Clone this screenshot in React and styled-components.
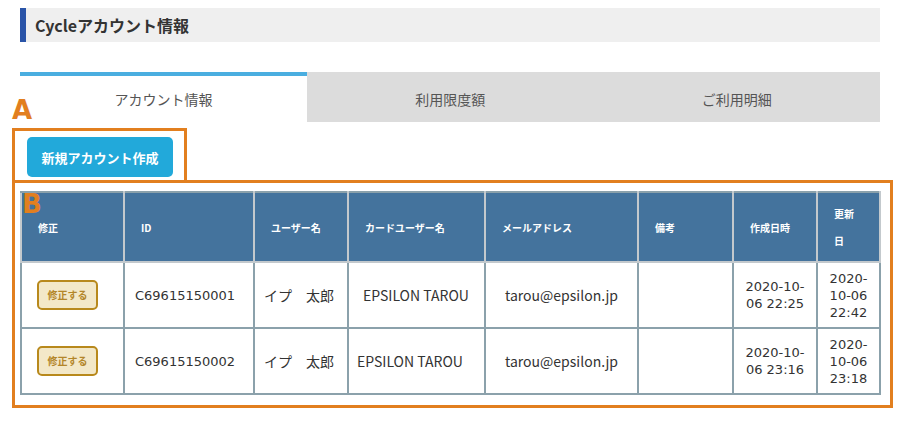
import React from "react";
import styled, { createGlobalStyle } from "styled-components";

const GlobalStyle = createGlobalStyle`
  body {
    margin: 0;
    background: #fff;
    font-family: "Noto Sans CJK JP", "Noto Sans", sans-serif;
  }
`;

const columns = [
  { label: "修正", width: 103 },
  { label: "ID", width: 130 },
  { label: "ユーザー名", width: 94 },
  { label: "カードユーザー名", width: 137 },
  { label: "メールアドレス", width: 153 },
  { label: "備考", width: 95 },
  { label: "作成日時", width: 84 },
  { label: "更新日", width: 63 },
];

const accounts = [
  {
    id: "C69615150001",
    user: "イプ　太郎",
    card: "EPSILON TAROU",
    cardPad: 14,
    mail: "tarou@epsilon.jp",
    created: ["2020-10-", "06 22:25"],
    updated: ["2020-", "10-06", "22:42"],
  },
  {
    id: "C69615150002",
    user: "イプ　太郎",
    card: "EPSILON TAROU",
    cardPad: 8,
    mail: "tarou@epsilon.jp",
    created: ["2020-10-", "06 23:16"],
    updated: ["2020-", "10-06", "23:18"],
  },
];

const tabs = ["アカウント情報", "利用限度額", "ご利用明細"];

function App() {
  return (
    <>
      <GlobalStyle />
      <Page>
        <TitleBar>Cycleアカウント情報</TitleBar>
        <Tabs>
          {tabs.map((t, i) => (
            <Tab key={t} $active={i === 0}>
              {t}
            </Tab>
          ))}
        </Tabs>

        <AnnotA>
          <Mark $top={-34}>A</Mark>
          <CreateButton>新規アカウント作成</CreateButton>
        </AnnotA>

        <AnnotB>
          <Mark $top={8} $left={7}>B</Mark>
          <Table>
            <colgroup>
              {columns.map((c) => (
                <col key={c.label} style={{ width: c.width }} />
              ))}
            </colgroup>
            <thead>
              <tr>
                {columns.map((c) => (
                  <Th key={c.label}>{c.label}</Th>
                ))}
              </tr>
            </thead>
            <tbody>
              {accounts.map((a) => (
                <tr key={a.id}>
                  <Td $pad={15}>
                    <EditButton>修正する</EditButton>
                  </Td>
                  <Td $mono $pad={10}>{a.id}</Td>
                  <Td $pad={9}>{a.user}</Td>
                  <Td $pad={a.cardPad}>{a.card}</Td>
                  <Td $center>{a.mail}</Td>
                  <Td />
                  <Td $mono $center>
                    {a.created.map((l) => (
                      <div key={l}>{l}</div>
                    ))}
                  </Td>
                  <Td $mono $center>
                    {a.updated.map((l) => (
                      <div key={l}>{l}</div>
                    ))}
                  </Td>
                </tr>
              ))}
            </tbody>
          </Table>
        </AnnotB>
      </Page>
    </>
  );
}

export default App;

const Page = styled.div`
  width: 900px;
  padding: 8px 20px 0;
  box-sizing: border-box;
`;

const TitleBar = styled.h1`
  margin: 0 0 30px;
  height: 34px;
  display: flex;
  align-items: center;
  padding-left: 9px;
  background: #efefef;
  border-left: 6px solid #2a54a8;
  font-size: 16px;
  font-weight: 700;
  color: #333;
`;

const Tabs = styled.div`
  display: grid;
  grid-template-columns: 287px 1fr 1fr;
  height: 50px;
`;

const Tab = styled.div`
  display: flex;
  align-items: center;
  justify-content: center;
  font-size: 14px;
  color: #555;
  background: ${(p) => (p.$active ? "#fff" : "#dcdcdc")};
  border-top: 4px solid ${(p) => (p.$active ? "#4aaee0" : "#dcdcdc")};
`;

const AnnotA = styled.div`
  position: relative;
  width: 175px;
  box-sizing: border-box;
  margin: 6px 0 0 -8px;
  padding: 6px 12px 3px;
  border: 3px solid #e27f1f;
  border-bottom: none;
`;

const AnnotB = styled.div`
  position: relative;
  width: 881px;
  box-sizing: border-box;
  margin-left: -8px;
  padding: 8px 10px 10px 5px;
  border: 3px solid #e27f1f;
`;

const Mark = styled.span`
  position: absolute;
  top: ${(p) => p.$top}px;
  left: ${(p) => p.$left ?? -3}px;
  font-family: "DejaVu Sans", sans-serif;
  font-weight: 700;
  font-size: 26px;
  line-height: 1;
  color: #e27f1f;
  z-index: 2;
`;

const CreateButton = styled.button`
  height: 40px;
  width: 146px;
  padding: 0;
  border: none;
  border-radius: 5px;
  background: #22a9da;
  color: #fff;
  font-family: "Noto Sans CJK JP", sans-serif;
  font-size: 13px;
  font-weight: 700;
`;

const Table = styled.table`
  border-collapse: collapse;
  table-layout: fixed;
  width: 859px;
  border: 2px solid #8ba1ab;
`;

const Th = styled.th`
  height: 68px;
  padding: 0 16px;
  background: #44739d;
  color: #fff;
  font-size: 10px;
  font-weight: 700;
  text-align: left;
  line-height: 27px;
  border: 2px solid #c3c9cd;
  border-top-color: #8ba1ab;
`;

const Td = styled.td`
  height: 64px;
  padding: 0 4px 0 ${(p) => p.$pad ?? 4}px;
  border: 2px solid #8ba1ab;
  text-align: ${(p) => (p.$center ? "center" : "left")};
  font-family: ${(p) =>
    p.$mono ? '"DejaVu Sans", sans-serif' : '"Noto Sans CJK JP", sans-serif'};
  font-size: ${(p) => (p.$mono ? "13px" : "14px")};
  line-height: ${(p) => (p.$mono ? "17px" : "20px")};
  color: #333;
`;

const EditButton = styled.span`
  display: inline-flex;
  align-items: center;
  justify-content: center;
  width: 61px;
  height: 30px;
  box-sizing: border-box;
  border: 2px solid #b8891c;
  border-radius: 5px;
  background: #f3e8c8;
  color: #b3862a;
  font-size: 10px;
  font-weight: 700;
`;
